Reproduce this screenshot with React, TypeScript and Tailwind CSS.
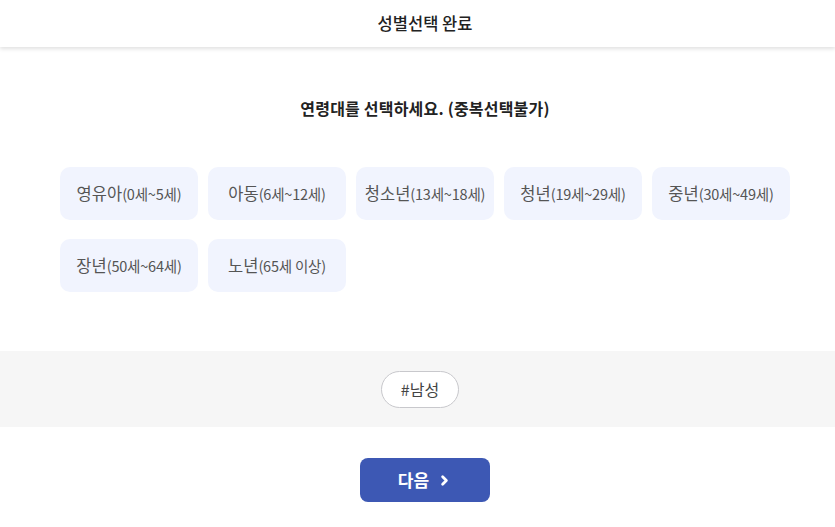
import type { FC } from 'react';
import { ChevronRight } from 'lucide-react';

const ages = [
  { name: '영유아', range: '(0세~5세)' },
  { name: '아동', range: '(6세~12세)' },
  { name: '청소년', range: '(13세~18세)' },
  { name: '청년', range: '(19세~29세)' },
  { name: '중년', range: '(30세~49세)' },
  { name: '장년', range: '(50세~64세)' },
  { name: '노년', range: '(65세 이상)' },
];

const App: FC = () => {
  return (
    <div className="min-h-[527px] w-[835px] bg-white font-['Noto_Sans_CJK_KR','Noto_Sans',sans-serif] text-[#222]">
      {/* Header */}
      <div className="h-[47px] pl-[15px] flex items-center justify-center bg-white shadow-[0_2px_4px_rgba(0,0,0,0.12)] relative">
        <h1 className="text-[16.5px] font-medium">성별선택 완료</h1>
      </div>

      {/* Age selection */}
      <div className="pt-[49px]">
        <p className="pl-[15px] text-center text-[16px] font-bold leading-[24px] tracking-[0.2px]">
          연령대를 선택하세요. (중복선택불가)
        </p>
        <div className="mt-[47px] pl-[60px] flex flex-wrap gap-x-[10px] gap-y-[19px] w-[800px]">
          {ages.map((a) => (
            <button
              key={a.name}
              className="w-[138px] h-[53px] rounded-[10px] bg-[#f1f4fe] flex items-center justify-center text-[#555]"
            >
              <span className="text-[16.5px]">{a.name}</span>
              <span className="text-[14.5px] tracking-[-0.2px]">{a.range}</span>
            </button>
          ))}
        </div>
      </div>

      {/* Selected tags */}
      <div className="mt-[59px] h-[76px] pl-[5px] bg-[#f6f6f6] flex items-center justify-center">
        <span className="h-[37px] w-[78px] rounded-full border border-[#c8c8cc] bg-white flex items-center justify-center text-[16px] text-[#444]">
          #남성
        </span>
      </div>

      {/* Next */}
      <div className="pt-[31px] pl-[15px] flex justify-center">
        <button className="w-[130px] h-[44px] rounded-[8px] bg-[#3d58b4] text-white flex items-center justify-center gap-[8px]">
          <span className="text-[17px] font-bold">다음</span>
          <ChevronRight className="w-[15px] h-[15px]" strokeWidth={4.5} />
        </button>
      </div>
    </div>
  );
};

export default App;
